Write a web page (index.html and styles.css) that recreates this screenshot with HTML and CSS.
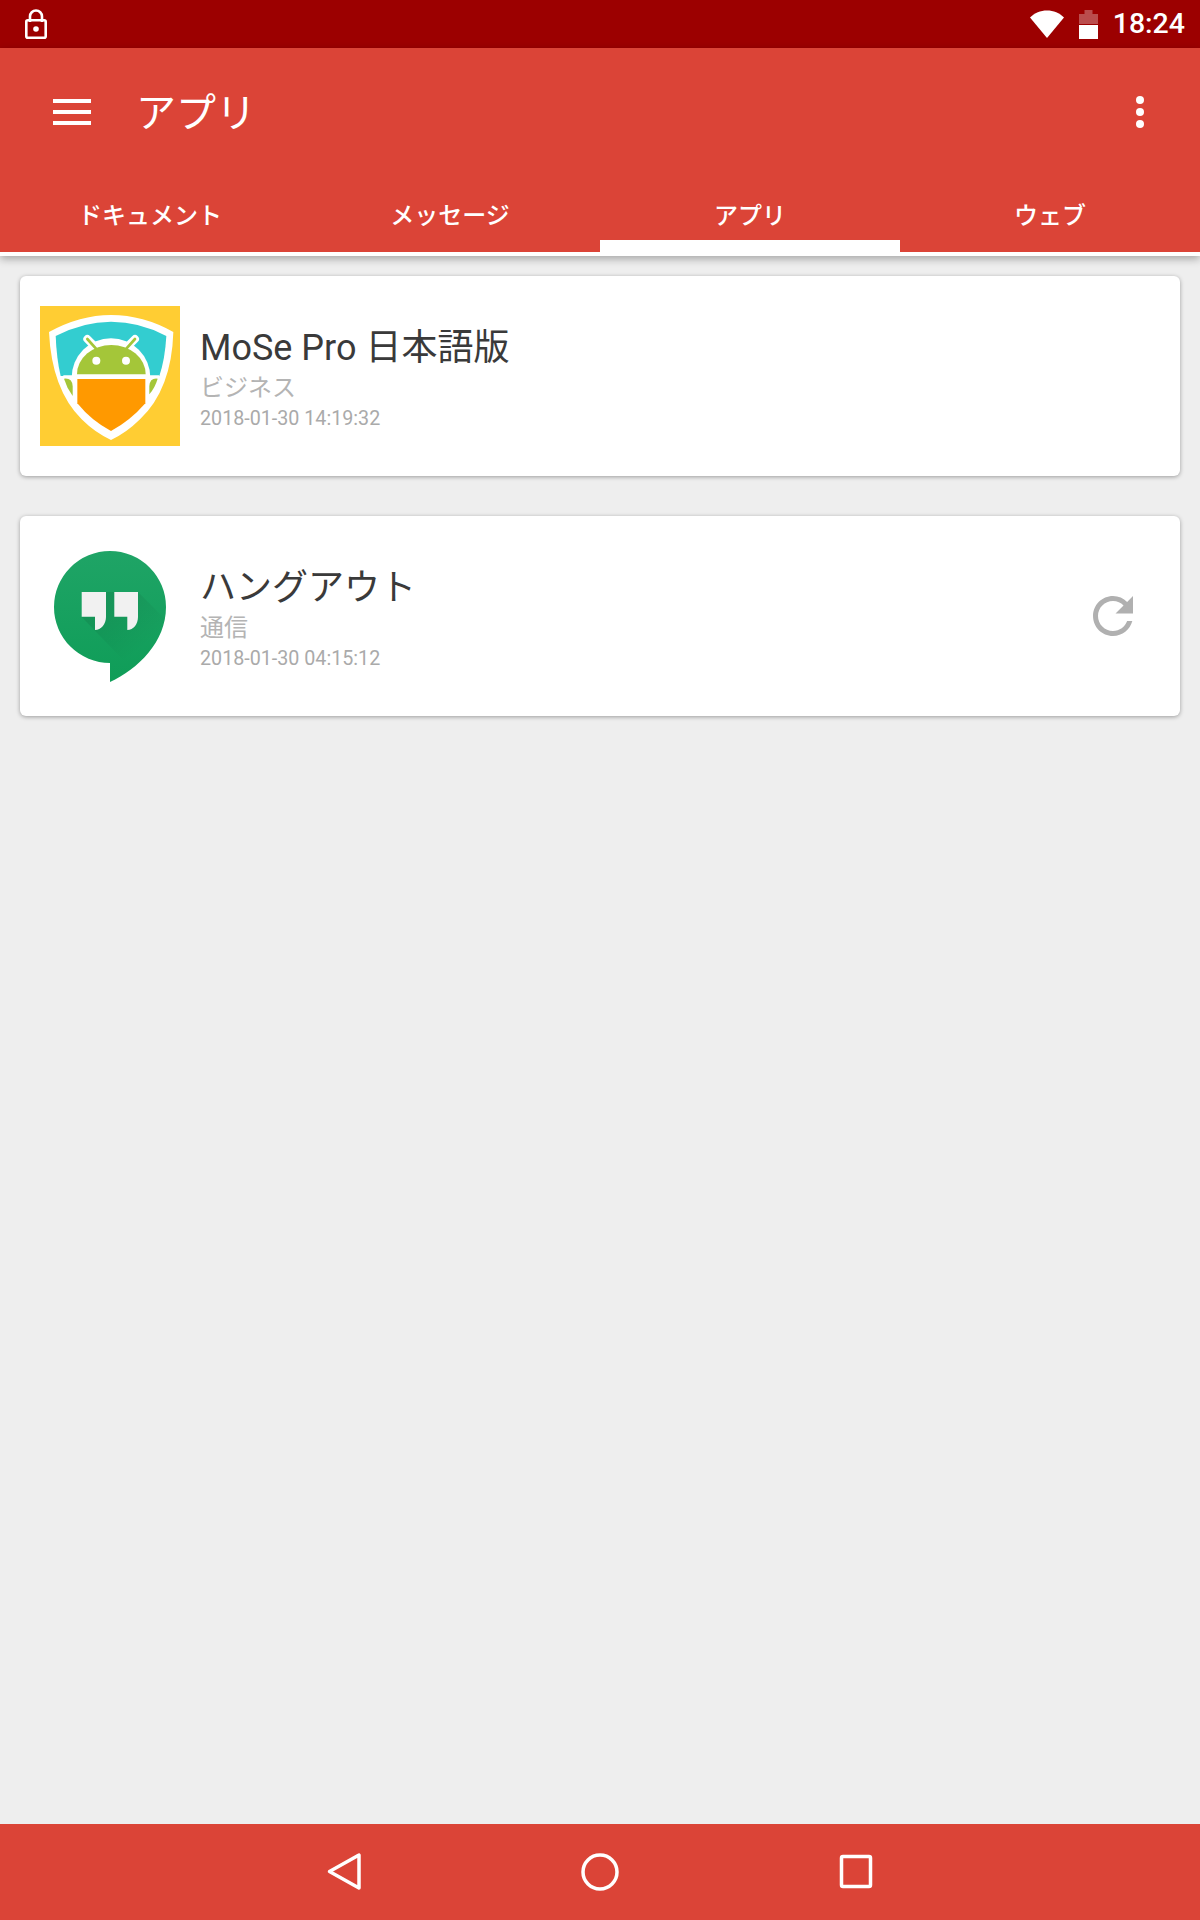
FILE: index.html
```html
<!DOCTYPE html>
<html lang="ja">
<head>
<meta charset="utf-8">
<title>アプリ</title>
<link rel="stylesheet" href="styles.css">
</head>
<body>
<div class="screen">
  <header class="status">
    <svg class="lock" width="22" height="30" viewBox="0 0 22 30"><path d="M5 13V7.500a6 6 0 0 1 12 0V13" fill="none" stroke="#fff" stroke-width="2.600"/><rect x="1.300" y="11.300" width="19.400" height="17.400" rx="1.500" fill="none" stroke="#fff" stroke-width="2.600"/><circle cx="11" cy="20" r="2.800" fill="#fff"/></svg>
    <div class="status-right">
      <svg class="wifi" width="34" height="28" viewBox="0 0 34 28"><path d="M0 7.500C4.500 3 10.500 0.500 17 0.500S29.500 3 34 7.500L17 28Z" fill="#fff"/></svg>
      <svg class="battery" width="19" height="29" viewBox="0 0 19 29"><path d="M0 4h5.500V0h8v4H19v10H0Z" fill="#fff" fill-opacity=".3"/><rect y="15" width="19" height="14" fill="#fff"/></svg>
      <span class="clock">18:24</span>
    </div>
  </header>

  <div class="appbar">
    <div class="toolbar">
      <svg class="menu" width="38" height="26" viewBox="0 0 38 26"><path d="M0 0h38v4H0ZM0 11h38v4H0ZM0 22h38v4H0Z" fill="#fff"/></svg>
      <h1 class="title">アプリ</h1>
      <svg class="more" width="8" height="32" viewBox="0 0 8 32"><circle cx="4" cy="4" r="4" fill="#fff"/><circle cx="4" cy="16" r="4" fill="#fff"/><circle cx="4" cy="28" r="4" fill="#fff"/></svg>
    </div>
    <nav class="tabs">
      <div class="tab">ドキュメント</div>
      <div class="tab">メッセージ</div>
      <div class="tab tab-active">アプリ</div>
      <div class="tab">ウェブ</div>
    </nav>
  </div>

  <main class="list">
    <article class="card">
      <svg class="app-icon" width="140" height="140" viewBox="0 0 420 420">
        <rect width="420" height="420" fill="#ffcd33"/>
        <path d="M27 78Q120 27 213 27Q310 27 400 78Q395 250 300 340Q260 380 213 402Q165 380 125 340Q35 250 27 78Z" fill="#fff"/>
        <path d="M47 90Q130 47 213 47Q300 47 379 90Q375 160 358 210H62Q50 160 47 90Z" fill="#33cdd0"/>
        <path d="M70 208H358L352 225H70Z" fill="#fff"/>
        <circle cx="213" cy="215" r="118" fill="#fff" clip-path="url(#headclip)"/>
        <clipPath id="headclip"><rect x="90" y="90" width="250" height="125"/></clipPath>
        <path d="M142 99L170 127M285 99L257 127" stroke="#fff" stroke-width="24" stroke-linecap="round"/>
        <path d="M142 99L170 130M285 99L257 130" stroke="#a4c639" stroke-width="8" stroke-linecap="round"/>
        <path d="M111 205A103 88 0 0 1 317 205Z" fill="#a4c639"/>
        <circle cx="169" cy="164" r="12" fill="#fff"/>
        <circle cx="258" cy="164" r="12" fill="#fff"/>
        <path d="M112 219H316V292Q270 345 213 375Q155 345 112 292Z" fill="#ff9900"/>
        <path d="M72 218Q96 215 98 240V270Q80 245 72 218Z" fill="#a4c639"/>
        <path d="M353 218Q330 215 328 240V265Q345 245 353 218Z" fill="#a4c639"/>
      </svg>
      <div class="info">
        <div class="name">MoSe Pro 日本語版</div>
        <div class="category">ビジネス</div>
        <div class="date">2018-01-30 14:19:32</div>
      </div>
    </article>

    <article class="card">
      <svg class="app-icon" width="140" height="140" viewBox="0 0 140 140">
        <defs>
          <linearGradient id="hangout" x1="0" y1="0" x2="0" y2="1"><stop offset="0" stop-color="#1fa466"/><stop offset="1" stop-color="#0f9d58"/></linearGradient>
          <linearGradient id="longshadow" x1="0" y1="0" x2="1" y2="1"><stop offset="0" stop-color="#000" stop-opacity=".12"/><stop offset=".7" stop-color="#000" stop-opacity="0"/></linearGradient>
          <clipPath id="bubble"><path d="M70 5A56 56 0 0 1 126 61C126 96 98 123 70 136V117A56 56 0 0 1 70 5Z"/></clipPath>
        </defs>
        <path d="M70 5A56 56 0 0 1 126 61C126 96 98 123 70 136V117A56 56 0 0 1 70 5Z" fill="url(#hangout)"/>
        <g clip-path="url(#bubble)"><path d="M66 46H98L134 82V121H90L41.700 71H55V84Z" fill="url(#longshadow)"/></g>
        <path d="M41.700 46H66V71C66 78 61 84 55 84V70.700H41.700Z" fill="#f1f1f1"/>
        <path d="M74.300 46H98V71C98 78 93.500 84 87.300 84V70.700H74.300Z" fill="#f1f1f1"/>
      </svg>
      <div class="info">
        <div class="name">ハングアウト</div>
        <div class="category">通信</div>
        <div class="date">2018-01-30 04:15:12</div>
      </div>
      <svg class="refresh" width="60" height="60" viewBox="0 0 24 24"><path d="M17.650 6.350C16.200 4.900 14.210 4 12 4c-4.420 0-7.990 3.580-7.990 8s3.570 8 7.990 8c3.730 0 6.840-2.550 7.730-6h-2.080c-.82 2.330-3.040 4-5.650 4-3.310 0-6-2.690-6-6s2.690-6 6-6c1.660 0 3.140.69 4.220 1.780L13 11h7V4l-2.350 2.350z" fill="#b0b0b0"/></svg>
    </article>
  </main>

  <footer class="navbar">
    <svg width="60" height="60" viewBox="0 0 60 60"><path d="M44 13V46L14.500 29.500Z" fill="none" stroke="#fff" stroke-width="3.500" stroke-linejoin="round"/></svg>
    <svg width="60" height="60" viewBox="0 0 60 60"><circle cx="30" cy="30" r="17" fill="none" stroke="#fff" stroke-width="3.500"/></svg>
    <svg width="60" height="60" viewBox="0 0 60 60"><rect x="16.500" y="14.500" width="29" height="30" rx="1.500" fill="none" stroke="#fff" stroke-width="3.500"/></svg>
  </footer>
</div>
</body>
</html>
```

FILE: styles.css
```css
* {
  box-sizing: border-box;
}

html,
body {
  margin: 0;
  padding: 0;
}

body {
  font-family: Roboto, "Noto Sans CJK JP", sans-serif;
  background: #eeeeee;
}

.screen {
  display: flex;
  flex-direction: column;
  height: 1920px;
}

svg {
  display: block;
  flex: none;
}

.status {
  display: flex;
  align-items: center;
  justify-content: space-between;
  height: 48px;
  padding: 0 15px 0 25px;
  background: #9c0000;
  color: #fff;
}

.status-right {
  display: flex;
  align-items: center;
}

.wifi {
  margin-right: 15px;
}

.battery {
  margin-right: 15px;
}

.clock {
  font-size: 28.5px;
  font-weight: 500;
  line-height: 48px;
}

.appbar {
  background: #db4437;
  border-bottom: 4px solid #fff;
  box-shadow: 0 3px 8px rgba(0, 0, 0, 0.3);
  color: #fff;
  position: relative;
}

.toolbar {
  display: flex;
  align-items: center;
  height: 128px;
  padding: 0 56px 0 53px;
}

.title {
  flex: 1;
  margin: 0 0 0 45px;
  padding-top: 4px;
  font-size: 40px;
  font-weight: 400;
  line-height: 48px;
}

.tabs {
  display: grid;
  grid-template-columns: repeat(4, 1fr);
  padding-top: 16px;
}

.tab {
  height: 60px;
  border-bottom: 12px solid transparent;
  font-size: 24px;
  font-weight: 500;
  line-height: 48px;
  text-align: center;
}

.tab-active {
  border-bottom-color: #fff;
}

.list {
  flex: 1;
  display: flex;
  flex-direction: column;
  gap: 40px;
  padding: 20px 20px 0;
}

.card {
  display: flex;
  align-items: center;
  height: 200px;
  padding: 0 20px;
  background: #fff;
  border-radius: 6px;
  box-shadow: 0 1px 4px rgba(0, 0, 0, 0.35);
}

.info {
  flex: 1;
  margin-left: 20px;
  padding-top: 6px;
}

.name {
  font-size: 36px;
  line-height: 49px;
  color: #3a3a3a;
}

.category {
  font-size: 24px;
  line-height: 31px;
  color: #b4b4b4;
}

.date {
  font-size: 19.7px;
  line-height: 30px;
  color: #aaaaaa;
}

.refresh {
  margin-right: 17px;
}

.navbar {
  display: flex;
  align-items: center;
  justify-content: center;
  gap: 195px;
  height: 96px;
  background: #db4437;
}
```
